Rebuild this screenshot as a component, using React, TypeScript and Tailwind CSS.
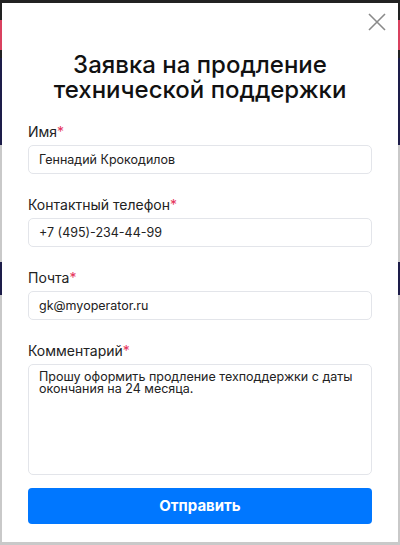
import { useState } from "react";

function Field({
  label,
  value,
  multiline,
}: {
  label: string;
  value: string;
  multiline?: boolean;
}) {
  const [v, setV] = useState(value);
  return (
    <label className="flex flex-col">
      <span className="text-[14px] leading-[18px] text-[#222] mb-[4px]">
        {label}
        <span className="text-[#e5335a]">*</span>
      </span>
      {multiline ? (
        <textarea
          value={v}
          onChange={(e) => setV(e.target.value)}
          className="h-[111px] resize-none rounded-[5px] border border-[#e3e5ea] px-[10px] py-[6px] text-[12.5px] leading-[12px] text-[#222] outline-none"
        />
      ) : (
        <input
          value={v}
          onChange={(e) => setV(e.target.value)}
          className="h-[29px] rounded-[5px] border border-[#e3e5ea] px-[10px] text-[12.5px] text-[#222] outline-none"
        />
      )}
    </label>
  );
}

export default function App() {
  return (
    <div
      className="relative h-[545px] w-[400px] overflow-hidden bg-[#c9c9c9]"
      style={{ fontFamily: "Inter, 'Noto Sans', sans-serif" }}
    >
      {/* backdrop bits of the page behind the modal */}
      <div className="flex h-full flex-col">
        <div className="h-[20px] bg-[#222]" />
        <div className="h-[30px] bg-[#d9415f]" />
        <div className="h-[8px] bg-[#222]" />
        <div className="h-[87px] bg-[#1d1d4a]" />
        <div className="h-[117px] bg-[#c9c9c9]" />
        <div className="h-[33px] bg-[#1d1d4a]" />
        <div className="flex-1 bg-[#c9c9c9]" />
      </div>

      <div className="absolute left-[2px] top-[3px] h-[539px] w-[396px] bg-white px-[26px] pt-[49px]">
        <button className="absolute right-[10px] top-[8px] p-[2px] text-[#8a8a8a]">
          <svg width="18" height="18" viewBox="0 0 18 18" fill="none" stroke="currentColor" strokeWidth="1.6">
            <path d="M1 1L17 17M17 1L1 17" />
          </svg>
        </button>

        <h1 className="text-center text-[24px] font-medium leading-[25px] text-[#111]">
          Заявка на продление
          <br />
          технической поддержки
        </h1>

        <div className="mt-[21px] flex flex-col gap-[22px]">
          <Field label="Имя" value="Геннадий Крокодилов" />
          <Field label="Контактный телефон" value="+7 (495)-234-44-99" />
          <Field label="Почта" value="gk@myoperator.ru" />
          <Field
            label="Комментарий"
            value="Прошу оформить продление техподдержки с даты окончания на 24 месяца."
            multiline
          />
        </div>

        <button className="mt-[13px] h-[36px] w-full rounded-[4px] bg-[#0077ff] text-[15px] font-bold text-white">
          Отправить
        </button>
      </div>
    </div>
  );
}
